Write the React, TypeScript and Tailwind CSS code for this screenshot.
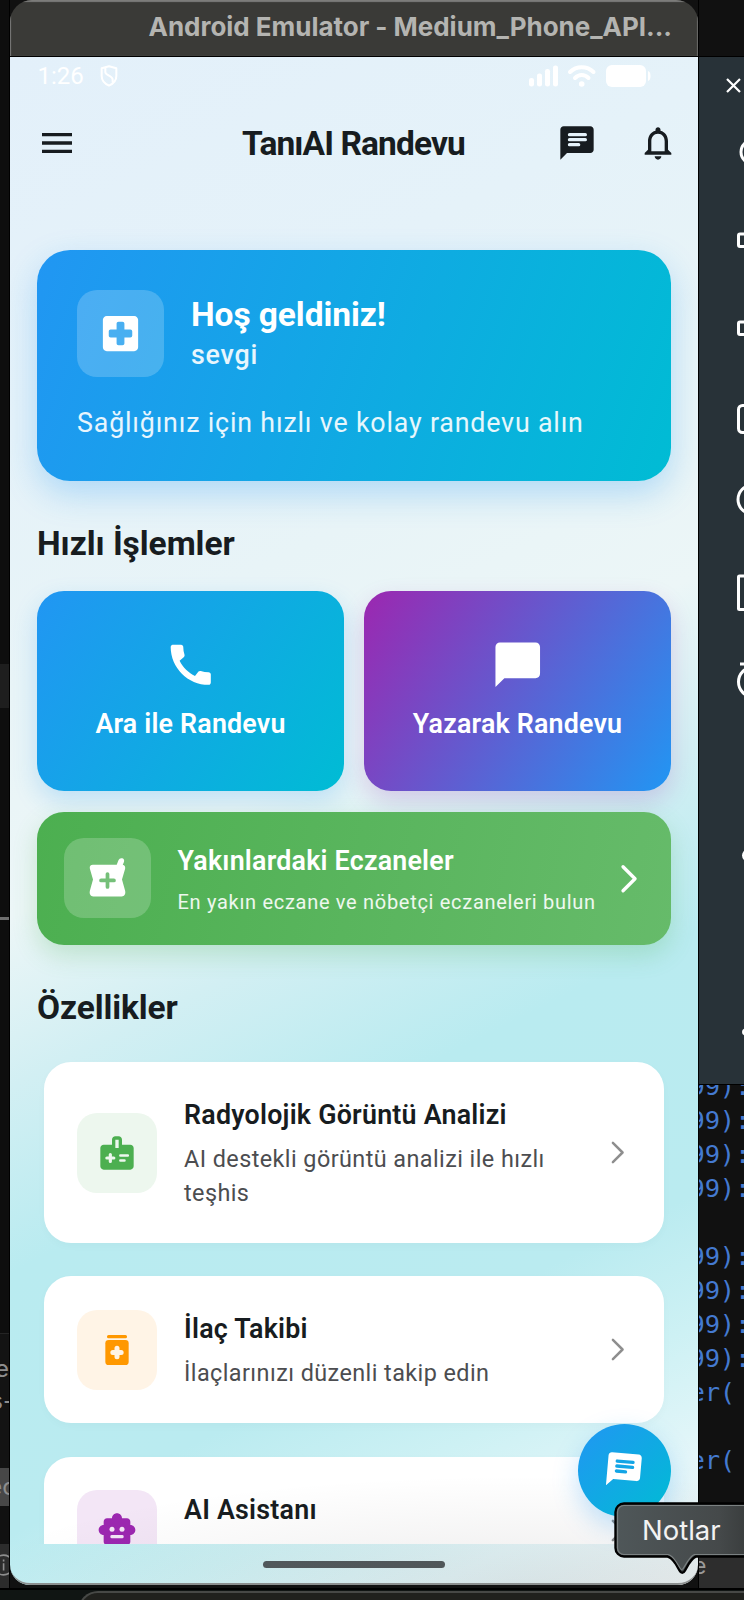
import type { ReactNode } from "react";
import { MdMenu, MdNotificationsNone, MdCall } from "react-icons/md";

function Svg({ className, children }: { className: string; children: ReactNode }) {
  return (
    <svg viewBox="0 0 24 24" className={className} fill="currentColor">
      {children}
    </svg>
  );
}

function ChatIcon({ className, line }: { className: string; line: string }) {
  return (
    <Svg className={className}>
      <path d="M20 2H4c-1.1 0-2 .9-2 2v18l4-4h14c1.1 0 2-.9 2-2V4c0-1.1-.9-2-2-2z" />
      <g fill="none" stroke={line} strokeWidth="2" strokeLinecap="round">
        <path d="M7.500 7h9.500M7.500 10h9.500M7.500 13h5.500" />
      </g>
    </Svg>
  );
}

function BubbleIcon() {
  return (
    <Svg className="size-[53.5px]">
      <path d="M20 2H4c-1.1 0-2 .9-2 2v18l4-4h14c1.1 0 2-.9 2-2V4c0-1.1-.9-2-2-2z" />
    </Svg>
  );
}

function HospitalIcon() {
  return (
    <Svg className="size-[47px]">
      <path
        fillRule="evenodd"
        d="M19 3H5c-1.1 0-2 .9-2 2v14c0 1.1.9 2 2 2h14c1.1 0 2-.9 2-2V5c0-1.1-.9-2-2-2zM17 14h-3v3c0 .6-.4 1-1 1h-2c-.6 0-1-.4-1-1v-3H7c-.6 0-1-.4-1-1v-2c0-.6.4-1 1-1h3V7c0-.6.4-1 1-1h2c.6 0 1 .4 1 1v3h3c.6 0 1 .4 1 1v2c0 .6-.4 1-1 1z"
      />
    </Svg>
  );
}

function PharmacyIcon() {
  return (
    <Svg className="mt-[3px] size-[47px]">
      <path d="M4.500 4.500H16.700l.9-2.300c.4-1 1.200-1.300 2-1 .8.300 1.100 1 .8 1.900L19.800 4.500c.9.200 1.400 1 1.200 2L19.400 12l1.600 5.800c.4 1.700-.4 2.900-1.700 2.900H4.700c-1.300 0-2.100-1.200-1.700-2.900L4.600 12 3 6.500C2.700 5.300 3.400 4.500 4.500 4.500z" />
      <path d="M12 9.200v6.600M8.700 12.500h6.600" stroke="#75c079" strokeWidth="1.900" strokeLinecap="round" />
    </Svg>
  );
}

function MedicalInfoIcon() {
  return (
    <Svg className="size-[40px]">
      <path
        fillRule="evenodd"
        d="M20 7h-5V4c0-1.1-.9-2-2-2h-2c-1.1 0-2 .9-2 2v3H4c-1.1 0-2 .9-2 2v11c0 1.1.9 2 2 2h16c1.1 0 2-.9 2-2V9c0-1.1-.9-2-2-2zm-9-3h2v5h-2V4z"
      />
      <g stroke="#edf7ee" strokeLinecap="round">
        <path d="M8 12.900v4.200M5.900 15h4.200" strokeWidth="1.900" />
        <path d="M14 13.500h4.500M14 16.500h2.500" strokeWidth="1.500" />
      </g>
    </Svg>
  );
}

function MedicationIcon() {
  return (
    <Svg className="size-[40px]">
      <rect x="6" y="3" width="12" height="2" rx="0.9" />
      <rect x="5" y="6" width="14" height="15" rx="2" />
      <path d="M12 11v5M9.500 13.500h5" stroke="#fff4e6" strokeWidth="3" strokeLinecap="round" />
    </Svg>
  );
}

function RobotIcon() {
  return (
    <Svg className="size-[40px]">
      <path d="M20 9V7c0-1.1-.9-2-2-2h-3c0-1.660-1.340-3-3-3S9 3.340 9 5H6c-1.1 0-2 .9-2 2v2c-1.660 0-3 1.340-3 3s1.340 3 3 3v4c0 1.1.9 2 2 2h12c1.1 0 2-.9 2-2v-4c1.660 0 3-1.340 3-3s-1.340-3-3-3z" />
      <g fill="#f3e5f6">
        <circle cx="9" cy="11.5" r="1.5" />
        <circle cx="15" cy="11.5" r="1.5" />
        <rect x="8" y="15" width="8" height="2" rx="0.9" />
      </g>
    </Svg>
  );
}

function Chevron({ className, width }: { className: string; width: string }) {
  return (
    <Svg className={className}>
      <path d="M7.900 3.400 16.500 12 7.900 20.600" fill="none" stroke="currentColor" strokeWidth={width} strokeLinecap="round" strokeLinejoin="round" />
    </Svg>
  );
}

function StatusBar() {
  return (
    <div className="flex h-[40px] items-start justify-between pl-[27.5px] pr-[47px] text-white">
      <div className="flex pt-[5px]">
        <span className="w-[61px] text-[24px] leading-[28px]">1:26</span>
        <svg viewBox="0 0 20 24" className="mt-[2.5px] h-[22px] w-[20px]" fill="none" stroke="currentColor" strokeWidth="2.2">
          <path d="M10 1.300 18 3.500v8.500c0 5-3.500 8.500-8 10.500-4.500-2-8-5.500-8-10.500V3.500z" strokeLinejoin="round" />
          <path d="M6 3v5c0 3 8 4 8 8v3" />
        </svg>
      </div>
      <svg viewBox="0 0 122 24" className="mt-[6.5px] h-[24px] w-[122px]" fill="currentColor">
        <rect x="0" y="14" width="5" height="8.5" rx="2.3" />
        <rect x="8" y="9.5" width="5" height="13" rx="2.3" />
        <rect x="16" y="5" width="5" height="17.5" rx="2.3" />
        <rect x="24" y="1.5" width="5" height="21" rx="2.3" />
        <g fill="none" stroke="currentColor" strokeWidth="4" strokeLinecap="round">
          <path d="M41 8c6.500-6.500 17-6.500 23.500 0" />
          <path d="M46 14c4-4 9.500-4 13.500 0" />
        </g>
        <circle cx="52.7" cy="20" r="2.8" />
        <rect x="77" y="1" width="40" height="22" rx="6" />
        <path d="M119 7c2 .5 2.500 2.500 2.500 5s-.5 4.500-2.500 5z" />
      </svg>
    </div>
  );
}

function AppBar() {
  return (
    <div className="flex h-[90px] items-center pl-[27px] pr-[20px] pt-[2px] text-[#171c20]">
      <MdMenu className="size-[40px]" />
      <h1 className="ml-[165px] w-[230px] whitespace-nowrap pt-[2px] text-[33.5px] font-bold leading-[40px] tracking-[-0.9px]">TanıAI Randevu</h1>
      <ChatIcon className="ml-[85px] size-[40px] shrink-0" line="#e5f2fa" />
      <MdNotificationsNone className="ml-auto size-[40px]" />
    </div>
  );
}

function FeatureCard({ title, text, tint, icon }: { title: string; text: string; tint: string; icon: ReactNode }) {
  return (
    <div className="mx-[7px] flex shrink-0 items-center rounded-[27px] bg-white px-[33px] py-[32.75px] shadow-[0_3px_10px_rgba(0,0,0,0.025)]">
      <div className={"flex size-[80px] shrink-0 items-center justify-center rounded-[20px] " + tint}>{icon}</div>
      <div className="ml-[27px] w-[396px] pt-[3px]">
        <h3 className="text-[26.8px] font-semibold leading-[34px] tracking-[0.24px] text-[#171c20]">{title}</h3>
        <p className="mt-[11px] min-h-[33.5px] text-[23.4px] leading-[33.5px] tracking-[0.43px] text-[#4c4d50]">{text}</p>
      </div>
      <Chevron className="ml-auto size-[27px] text-[#8e8e8e]" width="2.2" />
    </div>
  );
}

function Phone() {
  return (
    <div className="relative flex h-[1585px] w-[688px] flex-col overflow-hidden rounded-b-[20px] rounded-t-[22px] font-['Roboto',sans-serif]">
      <div className="flex h-[57px] shrink-0 items-start justify-end border-b-[1.5px] border-black bg-[#3a3a37] pr-[26px] pt-[10px] shadow-[inset_1px_2px_1px_#7c7c7a,inset_-1px_0_1px_#6c6c6a]">
        <span className="whitespace-nowrap font-['Inter',sans-serif] text-[26px] font-bold leading-[34px] tracking-[-0.03px] text-[#b4b4b1]">
          Android Emulator - Medium_Phone_API...
        </span>
      </div>
      <div className="flex min-h-0 flex-1 flex-col bg-[linear-gradient(153.5deg,#e3f0fa_0%,#e5f2f9_20%,#e8f4f7_34%,#ecf6f7_46%,#d2eff3_55%,#b9ebf0_65%,#baebf0_79%,#cdf1f4_86%,#e4f6f9_93%,#edf3f4_100%)]">
        <StatusBar />
        <AppBar />
        <main className="flex min-h-0 flex-1 flex-col overflow-hidden px-[27px] pt-[63px]">
          <section className="h-[231px] shrink-0 rounded-[33px] bg-[linear-gradient(110deg,#2196f3,#00bcd4)] px-[40px] pt-[40px] text-white shadow-[0_13px_33px_rgba(33,150,243,0.28)]">
            <div className="flex">
              <div className="flex size-[87px] items-center justify-center rounded-[20px] bg-white/20">
                <HospitalIcon />
              </div>
              <div className="ml-[27px] pt-[4px]">
                <h2 className="text-[33.5px] font-bold leading-[42px] tracking-[-0.08px]">Hoş geldiniz!</h2>
                <p className="mt-[-0.5px] text-[26.8px] font-medium leading-[38px] tracking-[0.8px] text-white/90">sevgi</p>
              </div>
            </div>
            <p className="mt-[26px] whitespace-nowrap text-[26.8px] leading-[40px] tracking-[0.82px] text-white/90">
              Sağlığınız için hızlı ve kolay randevu alın
            </p>
          </section>

          <h2 className="mt-[43px] shrink-0 text-[33.5px] font-bold leading-[40px] tracking-[-0.05px] text-[#171c20]">Hızlı İşlemler</h2>

          <div className="mt-[27px] grid h-[200px] shrink-0 grid-cols-2 gap-[20px] text-[26.8px] font-semibold leading-[34px] text-white">
            <div className="flex flex-col items-center rounded-[27px] bg-[linear-gradient(123deg,#2196f3,#00bcd4)] pt-[46.5px] shadow-[0_10px_25px_rgba(33,150,243,0.22)]">
              <MdCall className="size-[53.5px]" />
              <span className="mt-[16px] tracking-[0.2px]">Ara ile Randevu</span>
            </div>
            <div className="flex flex-col items-center rounded-[27px] bg-[linear-gradient(123deg,#9c27b0,#2196f3)] pt-[46.5px] shadow-[0_10px_25px_rgba(156,39,176,0.2)]">
              <BubbleIcon />
              <span className="mt-[16px] tracking-[0.2px]">Yazarak Randevu</span>
            </div>
          </div>

          <div className="mt-[20.5px] flex h-[133.5px] shrink-0 items-center rounded-[27px] bg-[linear-gradient(102deg,#4caf50,#66bb6a)] pl-[26.5px] pr-[26px] text-white shadow-[0_10px_25px_rgba(76,175,80,0.24)]">
            <div className="flex h-[80px] w-[87px] shrink-0 items-center justify-center rounded-[20px] bg-white/20">
              <PharmacyIcon />
            </div>
            <div className="ml-[27px] pt-[5px]">
              <h3 className="text-[26.8px] font-semibold leading-[32px] tracking-[0.22px]">Yakınlardaki Eczaneler</h3>
              <p className="mt-[11px] whitespace-nowrap text-[20px] leading-[28px] tracking-[0.7px] text-white/90">En yakın eczane ve nöbetçi eczaneleri bulun</p>
            </div>
            <Chevron className="ml-auto size-[33.5px]" width="2.4" />
          </div>

          <h2 className="mt-[43px] shrink-0 text-[33.5px] font-bold leading-[40px] tracking-[-0.1px] text-[#171c20]">Özellikler</h2>

          <div className="mt-[34.25px] flex flex-col gap-[33.5px]">
            <FeatureCard
              title="Radyolojik Görüntü Analizi"
              text="AI destekli görüntü analizi ile hızlı teşhis"
              tint="bg-[#edf7ee] text-[#4caf50]"
              icon={<MedicalInfoIcon />}
            />
            <FeatureCard
              title="İlaç Takibi"
              text="İlaçlarınızı düzenli takip edin"
              tint="bg-[#fff4e6] text-[#ff9800]"
              icon={<MedicationIcon />}
            />
            <FeatureCard title="AI Asistanı" text="" tint="bg-[#f3e6f6] text-[#9c27b0]" icon={<RobotIcon />} />
          </div>
        </main>
        <div className="flex h-[41px] shrink-0 justify-center pt-[17px]">
          <div className="h-[6.5px] w-[182px] rounded-full bg-[#535b5e]" />
        </div>
      </div>
      <div className="pointer-events-none absolute bottom-0 right-0 h-[120px] w-full bg-[radial-gradient(ellipse_560px_110px_at_75%_100%,rgba(30,20,20,0.08),rgba(30,20,20,0))]" />
      <div className="absolute bottom-[68px] right-[27px] flex size-[93.5px] items-center justify-center rounded-full bg-[linear-gradient(135deg,#2196f3,#00bcd4)] text-white shadow-[0_10px_26px_rgba(33,150,243,0.27)]">
        <ChatIcon className="size-[40px] rotate-[5deg]" line="#13a5e6" />
      </div>
      <div className="pointer-events-none absolute inset-x-0 bottom-0 h-[24px] rounded-b-[20px] border-b-[2px] border-[#8b8e8e]" />
    </div>
  );
}

const codeLines = ["99):", "99):", "99):", "99):", "", "99):", "99):", "99):", "99):", "er(", "", "er("];

function RightSide() {
  return (
    <div className="flex min-w-0 flex-1 flex-col overflow-hidden border-l border-black bg-[#111111]">
      <div className="h-[56px] shrink-0" />
      <div className="h-[1029px] shrink-0 border-y-[1.5px] border-black bg-[#283238]">
        <svg viewBox="0 0 45 1026" className="h-[1026px] w-[45px]" fill="none" stroke="#fff" strokeWidth="3">
          <path d="m28 22 13 13m0-13L28 35" strokeWidth="2.2" />
          <circle cx="54" cy="95" r="12" />
          <rect x="39.5" y="177" width="20" height="12.5" rx="1.5" />
          <rect x="39.5" y="265" width="20" height="12.5" rx="1.5" />
          <rect x="39.5" y="348.5" width="28" height="27" rx="4" />
          <circle cx="53.5" cy="442.5" r="14.5" />
          <rect x="39.5" y="519" width="24" height="33.5" rx="1" />
          <circle cx="54.5" cy="625" r="15" />
          <path d="M41 607h10" />
          <circle cx="49" cy="798.5" r="6" fill="#fff" stroke="none" />
          <circle cx="46.5" cy="975" r="3.5" fill="#fff" stroke="none" />
        </svg>
      </div>
      <div className="flex-1 overflow-hidden">
        <div className="ml-[-9.5px] mt-[-16px] whitespace-pre font-['DejaVu_Sans_Mono',monospace] text-[25.5px] tracking-[-0.2px] text-[#447ad0]">
          {codeLines.map((line, i) => (
            <div key={i} className="h-[34px] leading-[34px]">
              {line}
            </div>
          ))}
        </div>
      </div>
      <div className="h-[84px] bg-[#2d2d2d] pt-[44px] font-['Inter',sans-serif] text-[23px] leading-[36px] text-[#9a9a9a]">
        <span className="ml-[-6px]">e</span>
      </div>
    </div>
  );
}

function LeftSide() {
  return (
    <div className="flex w-[10px] shrink-0 flex-col overflow-hidden border-r border-black bg-[#0e0e0e] font-['Inter',sans-serif] text-[24px] text-[#8d8d8d]">
      <div className="h-[664px] shrink-0" />
      <div className="h-[44px] shrink-0 bg-[#1e1e1e]" />
      <div className="h-[209px] shrink-0" />
      <div className="h-[2.5px] shrink-0 bg-[#6f6f6f]" />
      <div className="h-[413.5px] shrink-0" />
      <div className="flex h-[173px] shrink-0 flex-col border-t border-[#242424] bg-[#131313] pt-[19px]">
        <div className="flex h-[32px] justify-end leading-[32px]">e</div>
        <div className="flex h-[32px] justify-end leading-[32px]">
          <span className="mr-[-5px]">s-</span>
        </div>
        <div className="mt-[51px] flex h-[40px] items-center justify-end bg-[#474747]">
          <span className="mr-[-7px]">ec</span>
        </div>
      </div>
      <div className="h-[38px] shrink-0 bg-[#111111]" />
      <div className="flex flex-1 items-start bg-[#2c2c2c] pt-[9px]">
        <svg viewBox="0 0 10 24" className="h-[24px] w-[10px]" fill="none" stroke="#8d8d8d" strokeWidth="1.8">
          <circle cx="4" cy="12" r="11" />
          <path d="M4 10v8M4 6v2" />
        </svg>
      </div>
    </div>
  );
}

function Tooltip() {
  return (
    <div className="absolute left-[614px] top-[1502px] h-[74px] w-[140px]">
      <svg viewBox="0 0 140 74" className="absolute inset-0 h-[74px] w-[140px]">
        <defs>
          <linearGradient id="tip" x1="0" x2="1" y1="0" y2="0">
            <stop offset="0" stopColor="#4f5759" />
            <stop offset="0.7" stopColor="#45494a" />
            <stop offset="1" stopColor="#333636" />
          </linearGradient>
        </defs>
        <path
          d="M10 1.500h140v53H82c-3 1-5 4-7 7l-4 7c-1.500 3-4 3-5.500 0l-4-7c-2-3-4-6-8-7H10a8.500 8.500 0 0 1-8.500-8.500v-36A8.500 8.500 0 0 1 10 1.500z"
          fill="url(#tip)"
          stroke="#000"
          strokeWidth="2.4"
        />
        <path
          d="M140 3.500H10A6.500 6.500 0 0 0 3.500 10v36a6.500 6.500 0 0 0 6.500 6.500h44c4 1 6 4 8 7l4 6.500c1 2 2.500 2 3.500 0l4-6.500c2-3 4-6 7-7h60"
          fill="none"
          stroke="#7b8182"
          strokeWidth="1.2"
        />
      </svg>
      <div className="relative pl-[28px] pt-[11px] font-['Inter',sans-serif] text-[27.5px] leading-[34px] text-[#f2f2f2]">Notlar</div>
    </div>
  );
}

export default function App() {
  return (
    <div className="relative flex h-[1600px] w-[744px] flex-col overflow-hidden bg-[#111111]">
      <div className="flex h-[1588px] shrink-0">
        <LeftSide />
        <Phone />
        <RightSide />
      </div>
      <div className="flex-1 border-t-[2px] border-black bg-[#101513] pl-[78px] pt-[1px]">
        <div className="h-[20px] rounded-tl-[22px] border-l-2 border-t-2 border-[#474946] bg-[#20211d]" />
      </div>
      <Tooltip />
    </div>
  );
}
